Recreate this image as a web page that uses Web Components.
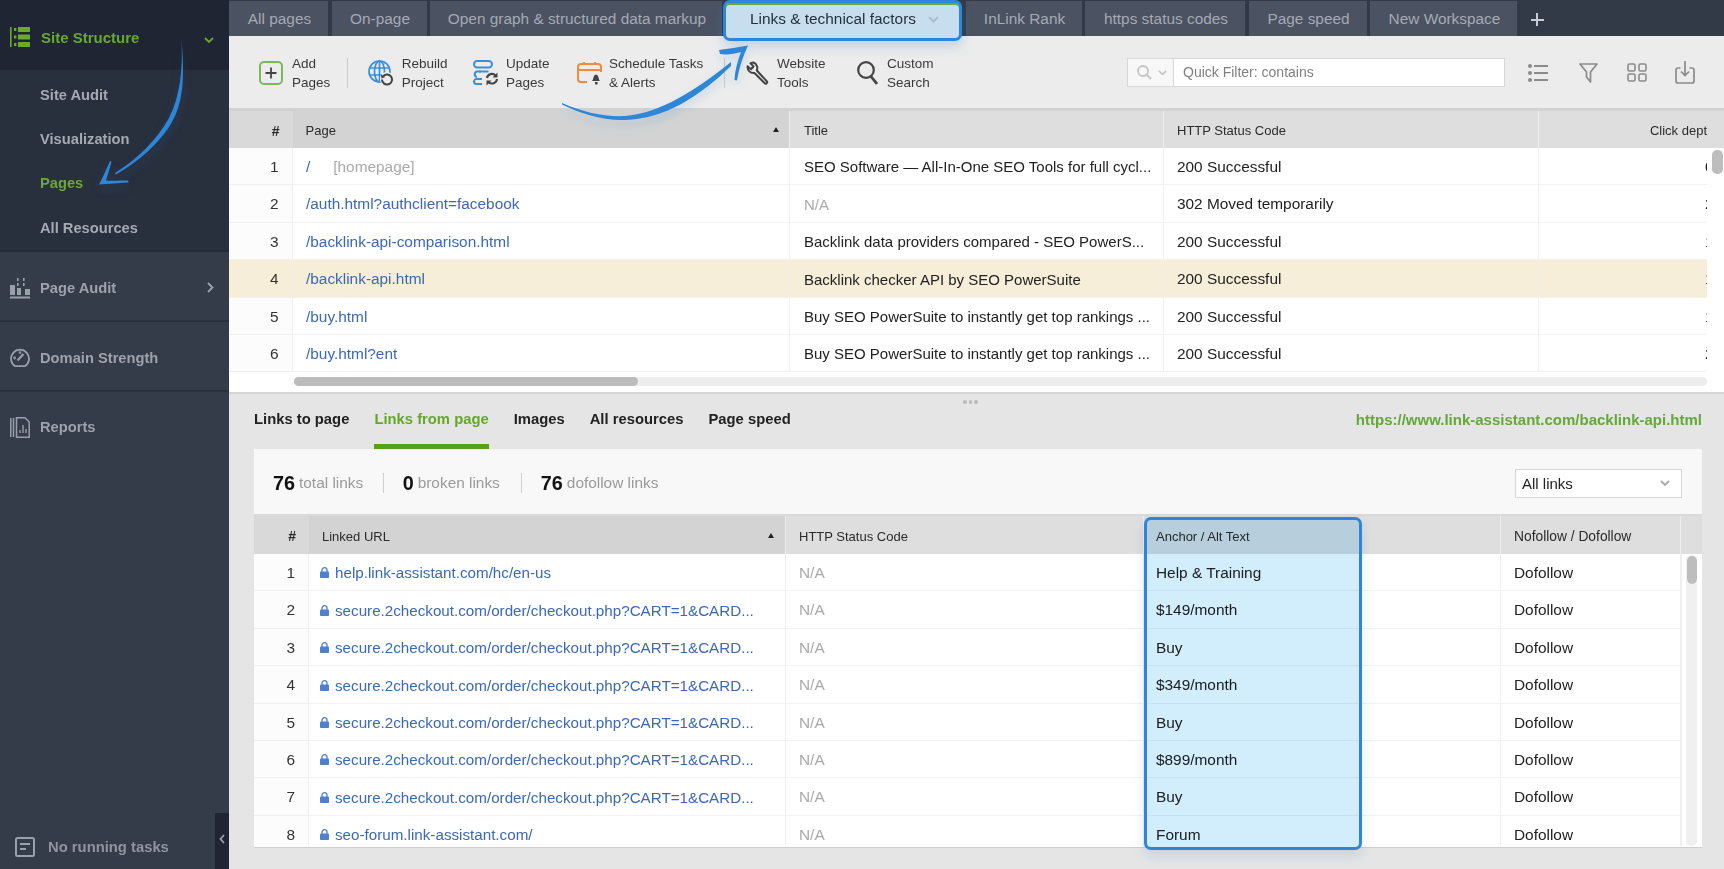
<!DOCTYPE html>
<html>
<head>
<meta charset="utf-8">
<title>Site Structure</title>
<style>
html, body { margin: 0; height: 100%; overflow: hidden; background: #e5e5e5; }
body { font-family: "Liberation Sans", Arial, sans-serif; }
</style>
</head>
<body>
<app-shell>
  <side-bar slot="side">
    <side-head label="Site Structure" icon="structure"></side-head>
    <side-list>
      <side-sub>Site Audit</side-sub>
      <side-sub>Visualization</side-sub>
      <side-sub active>Pages</side-sub>
      <side-sub>All Resources</side-sub>
    </side-list>
    <side-section icon="audit" arrow>Page Audit</side-section>
    <side-section icon="gauge">Domain Strength</side-section>
    <side-section icon="reports">Reports</side-section>
  </side-bar>

  <tab-bar slot="tabs">
    <tab-item style="width:99px">All pages</tab-item>
    <tab-item style="width:95px">On-page</tab-item>
    <tab-item style="width:292px">Open graph &amp; structured data markup</tab-item>
    <tab-item active style="width:239px">Links &amp; technical factors</tab-item>
    <tab-item style="width:116px">InLink Rank</tab-item>
    <tab-item style="width:160px">https status codes</tab-item>
    <tab-item style="width:118px">Page speed</tab-item>
    <tab-item style="width:147px">New Workspace</tab-item>
  </tab-bar>

  <tool-bar slot="tools"></tool-bar>
  <pages-table slot="top"></pages-table>
  <detail-panel slot="bottom"></detail-panel>
</app-shell>

<script>
const ICONS = {
  structure: `<svg width="20" height="20" viewBox="0 0 20 20" fill="#6aaa2c"><rect x="0" y="0" width="1.6" height="20"/><rect x="4" y="1" width="2.4" height="3"/><rect x="8" y="0" width="12" height="5"/><rect x="4" y="8.5" width="2.4" height="3"/><rect x="8" y="7.5" width="12" height="5"/><rect x="4" y="16" width="2.4" height="3"/><rect x="8" y="15" width="12" height="5"/></svg>`,
  audit: `<svg width="20" height="22" viewBox="0 0 20 22" fill="#9aa0a9"><rect x="0" y="8" width="5" height="10"/><rect x="7" y="1" width="1.6" height="3"/><rect x="7" y="6" width="1.6" height="3"/><rect x="7" y="11" width="4" height="7"/><rect x="13" y="1" width="1.6" height="3"/><rect x="13" y="6" width="1.6" height="3"/><rect x="15" y="12" width="5" height="6"/><rect x="0" y="19.5" width="20" height="2"/></svg>`,
  gauge: `<svg width="20" height="20" viewBox="0 0 20 20" fill="none" stroke="#9aa0a9" stroke-width="1.8"><path d="M5 18.2 A9 9 0 1 1 15 18.2 Z" stroke-linejoin="round"/><path d="M7.5 12.5 L13.5 6" stroke-width="2.2"/><circle cx="4.6" cy="10" r=".5"/><circle cx="10" cy="4.6" r=".5"/></svg>`,
  reports: `<svg width="20" height="21" viewBox="0 0 20 21" fill="none" stroke="#9aa0a9" stroke-width="1.5"><path d="M.8 1v19"/><path d="M3.5 1v19"/><path d="M6.5 .8h8.5l4.2 4.2v15.2H6.5z"/><path d="M10 16v-3M13 16V8M16 16v-4" stroke-width="1.4"/></svg>`,
  tasks: `<svg width="20" height="20" viewBox="0 0 20 20" fill="none" stroke="#9aa0a9" stroke-width="2"><rect x="1" y="1" width="18" height="18" rx="1.5"/><path d="M5 7h10M5 12h6"/></svg>`,
  add: `<svg width="24" height="24" viewBox="0 0 24 24" fill="none"><rect x="1" y="1" width="22" height="22" rx="4" stroke="#7db75d" stroke-width="2"/><path d="M12 6.5v11M6.5 12h11" stroke="#444" stroke-width="1.8"/></svg>`,
  globe: `<svg width="26" height="26" viewBox="0 0 26 26" fill="none"><g stroke="#3a8fdc" stroke-width="1.7"><circle cx="11.5" cy="11.5" r="10.5"/><ellipse cx="11.5" cy="11.5" rx="5" ry="10.5"/><path d="M11.5 1v21M1.5 8h20M1.5 15h20"/></g><circle cx="19" cy="19" r="7" fill="#ececec"/><path d="M14.8 16.8A5 5 0 1 1 14 19.5" stroke="#444" stroke-width="2"/><path d="M12.8 14.5l.8 4 3.6-1.5z" fill="#444"/></svg>`,
  update: `<svg width="26" height="26" viewBox="0 0 26 26" fill="none"><g stroke="#3a8fdc" stroke-width="2"><rect x="1" y="1" width="18" height="6.5" rx="3.2"/><path d="M8 11.5h-4a2.8 2.8 0 0 0 0 5.5"/><path d="M4 7.5M6 11.5h9.5"/><path d="M1 21.5a2.6 2.6 0 0 1 2.6-2.6h5.4M1 21.5a2.6 2.6 0 0 0 2.6 2.6h5.4"/></g><g stroke="#444" stroke-width="2.2"><path d="M14 18a5 5 0 0 1 8.5-2.5"/><path d="M24 19a5 5 0 0 1-8.5 3"/></g><path d="M24.5 12.5v5h-5zM13.5 25.5v-5h5z" fill="#444"/></svg>`,
  schedule: `<svg width="25" height="24" viewBox="0 0 25 24" fill="none"><path d="M10 21H4a3 3 0 0 1-3-3V6a3 3 0 0 1 3-3h17a3 3 0 0 1 3 3v5" stroke="#f28a3c" stroke-width="2"/><path d="M1 9h23M7 1v3M18 1v3" stroke="#f28a3c" stroke-width="2"/><path d="M15 20c1.5-1 1-6 4-6.500 3 .5 2.500 5.500 4 6.500z" fill="#444"/><rect x="18" y="21" width="2.600" height="2.400" fill="#444"/></svg>`,
  wrench: `<svg width="24" height="24" viewBox="0 0 24 24" fill="none" stroke="#444" stroke-width="2" stroke-linejoin="round"><path d="M8.500 1.500l-3 .8 3 3.200-2.500 2.700-3.400-3A6 6 0 0 0 9.500 12L20 22.500c1 .8 2.800-1 2-2L11.800 9.500A6 6 0 0 0 8.500 1.500z"/></svg>`,
  search: `<svg width="21" height="24" viewBox="0 0 21 24" fill="none" stroke="#444"><circle cx="9" cy="9" r="7.800" stroke-width="2.200"/><path d="M14 15.500l6 7.500" stroke-width="2.800"/></svg>`,
  list: `<svg width="20" height="18" viewBox="0 0 20 18" fill="#8b8b8b"><circle cx="2" cy="2" r="2"/><circle cx="2" cy="9" r="2"/><circle cx="2" cy="16" r="2"/><rect x="6" y="1" width="14" height="2"/><rect x="6" y="8" width="14" height="2"/><rect x="6" y="15" width="14" height="2"/></svg>`,
  filter: `<svg width="19" height="20" viewBox="0 0 19 20" fill="none" stroke="#8b8b8b" stroke-width="1.700" stroke-linejoin="round"><path d="M1 1h17l-6.500 8v10l-4-5V9z"/></svg>`,
  grid: `<svg width="20" height="19" viewBox="0 0 20 19" fill="none" stroke="#8b8b8b" stroke-width="1.600"><rect x="1" y="1" width="7" height="7" rx="1.500"/><rect x="12" y="1" width="7" height="7" rx="1.500"/><rect x="1" y="11" width="7" height="7" rx="1.500"/><rect x="12" y="11" width="7" height="7" rx="1.500"/></svg>`,
  save: `<svg width="20" height="23" viewBox="0 0 20 23" fill="none" stroke="#8b8b8b" stroke-width="1.700"><path d="M5.500 7H3a2 2 0 0 0-2 2v11a2 2 0 0 0 2 2h14a2 2 0 0 0 2-2V9a2 2 0 0 0-2-2h-2.500"/><path d="M10 0v14M6 10.500l4 4 4-4"/></svg>`,
  lock: `<svg width="9" height="11" viewBox="0 0 9 11"><path d="M2 5V3.200a2.500 2.500 0 0 1 5 0V5" fill="none" stroke="#4f80d0" stroke-width="1.300"/><rect x="0" y="4.500" width="9" height="6.500" rx=".8" fill="#4f80d0"/></svg>`,
  lens: `<svg width="15" height="15" viewBox="0 0 15 15" fill="none" stroke="#c4c4c4" stroke-width="1.800"><circle cx="6" cy="6" r="5"/><path d="M9.500 9.500l4.500 4.500"/></svg>`
};
const chevronDown = (c, w) => `<svg width="${w}" height="${w * .6}" viewBox="0 0 10 6" fill="none" stroke="${c}" stroke-width="1.800"><path d="M1 1l4 4 4-4"/></svg>`;

function define(name, css, html, setup) {
  customElements.define(name, class extends HTMLElement {
    constructor() {
      super();
      this.attachShadow({ mode: "open" });
      const tpl = document.createElement("template");
      tpl.innerHTML = `<style>${css}</style>${typeof html === "function" ? html(this) : html}`;
      this.shadowRoot.appendChild(tpl.content.cloneNode(true));
    }
    connectedCallback() {
      if (setup) setup(this, this.shadowRoot);
    }
  });
}

define("app-shell", `
  :host { display: grid; grid-template-columns: 229px 1495px; grid-template-rows: 36px 75px 283px 1fr; width: 1724px; height: 869px; position: relative; overflow: hidden; background: #e5e5e5; }
  .side { grid-row: 1 / 5; display: flex; }
  .cell { min-width: 0; }
  svg.over { position: absolute; left: 0; top: 0; pointer-events: none; z-index: 5; filter: drop-shadow(0 5px 5px rgba(46,134,216,.2)); }
`, `
  <div class="side"><slot name="side"></slot></div>
  <div class="cell"><slot name="tabs"></slot></div>
  <div class="cell"><slot name="tools"></slot></div>
  <div class="cell"><slot name="top"></slot></div>
  <div class="cell"><slot name="bottom"></slot></div>
  <svg class="over" width="1724" height="869" viewBox="0 0 1724 869" fill="#2e86d8">
    <path d="M181.500 39C184 70 185 100 172 122C160 143 138 162 116 174.500L115 173C136 160 156 141 168.500 119C180 97 183 70 181.500 39Z"/>
    <path d="M110 161C106 170 103 177 99 184.500C108 184 118 183 128.500 182.500L128 180.500C120 180.500 112 181 106 180.500C108 174 110 168 111.500 161.500Z"/>
    <path d="M562 103C585 113 605 117 625 116C660 113 695 91 731 62L731 66C700 96 665 119 625 120C600 120.500 580 113 562 104.500Z"/>
    <path d="M719 50C728 49 738 47 748 45.500C743 56 739 68 737 80.500L734.500 80C735 70 738 60 741 52C734 54 727 55 720 54Z"/>
  </svg>
`);

define("side-bar", `
  :host { display: flex; flex-direction: column; width: 229px; height: 869px; background: #343b49; position: relative; color: #9da2ab; font-size: 14.700px; font-weight: bold; }
  .foot { margin-top: auto; display: flex; align-items: center; height: 56px; position: relative; }
  .foot svg { margin-left: 15px; margin-right: 13px; margin-top: 12px; }
  .foot span { margin-top: 12px; font-size: 14.800px; color: #8f949d; }
  .fold { position: absolute; right: 0; top: 0; bottom: 0; width: 14px; background: #1f2532; display: flex; align-items: center; justify-content: center; padding-bottom: 4px; box-sizing: border-box; }
  .fold svg { margin: 0; }
`, `
  <slot></slot>
  <div class="foot">${ICONS.tasks}<span>No running tasks</span><div class="fold"><svg width="6" height="10" viewBox="0 0 6 10" fill="none" stroke="#9da2ab" stroke-width="1.800"><path d="M5 1L1.500 5 5 9"/></svg></div></div>
`);

define("side-head", `
  :host { display: flex; align-items: center; height: 70px; padding: 4px 0 0 10px; box-sizing: border-box; background: #1f2532; color: #66aa2b; font-size: 15px; font-weight: bold; }
  .ic { width: 31px; display: flex; }
  .chev { margin-left: auto; margin-right: 15px; }
`, el => `
  <div class="ic">${ICONS[el.getAttribute("icon")]}</div><span>${el.getAttribute("label")}</span>
  <div class="chev">${chevronDown("#66aa2b", 10)}</div>
`);

define("side-list", `
  :host { display: flex; flex-direction: column; height: 182px; padding-top: 2.500px; box-sizing: border-box; background: #282f3d; border-bottom: 2px solid #232935; }
`, `<slot></slot>`);

define("side-sub", `
  :host { display: flex; align-items: center; height: 45px; padding-left: 40px; color: #a5aab2; font-size: 14.700px; font-weight: bold; }
  :host([active]) { color: #6ca92f; }
`, `<slot></slot>`);

define("side-section", `
  :host { display: flex; align-items: center; height: 70px; padding: 4px 0 0 10px; border-bottom: 2px solid #2a303c; box-sizing: border-box; color: #9da2ab; font-size: 14.700px; font-weight: bold; }
  :host(:last-of-type) { border-bottom: 0; padding-top: 0; }
  .ic { width: 30px; display: flex; }
  .chev { margin-left: auto; margin-right: 15px; }
`, el => `
  <div class="ic">${ICONS[el.getAttribute("icon")]}</div><slot></slot>
  ${el.hasAttribute("arrow") ? `<div class="chev"><svg width="7" height="11" viewBox="0 0 7 11" fill="none" stroke="#9da2ab" stroke-width="1.800"><path d="M1 1l4.500 4.500L1 10"/></svg></div>` : ""}
`);

define("tab-bar", `
  :host { display: flex; gap: 3.500px; align-items: flex-start; height: 36px; background: #333a47; padding-top: 1px; box-sizing: border-box; position: relative; z-index: 3; }
  .plus { width: 13px; height: 13px; margin: 12px 0 0 10px; position: relative; }
  .plus::before, .plus::after { content: ""; position: absolute; background: #c9ccd2; }
  .plus::before { left: 0; right: 0; top: 5.500px; height: 2px; }
  .plus::after { top: 0; bottom: 0; left: 5.500px; width: 2px; }
`, `<slot></slot><div class="plus"></div>`);

define("tab-item", `
  :host { display: flex; align-items: center; justify-content: center; height: 35px; padding-left: 2px; background: #4b5262; color: #a5aab3; font-size: 15.4px; white-space: nowrap; box-sizing: border-box; flex: none; }
  :host([active]) { height: 41px; margin: -1px 0 -5px -2.500px; position: relative; z-index: 4; justify-content: flex-start; padding: 0 0 3px 24px; background: #c6deee; color: #26313d; border: 3px solid #2e86d8; border-radius: 7px; box-shadow: 0 5px 12px rgba(46,134,216,.25), inset 0 2px 0 #6aaa2c; }
  .chev { display: none; }
  :host([active]) .chev { display: block; margin-left: 12px; margin-top: -2px; }
`, `<slot></slot><div class="chev">${chevronDown("#a9bccb", 11)}</div>`);

define("tool-btn", `
  :host { display: flex; align-items: center; flex: none; font-size: 13.500px; line-height: 19px; color: #3a3a3a; box-sizing: border-box; }
  .ic { display: flex; flex: none; }
  .lb { white-space: nowrap; }
`, el => `<div class="ic" style="width:${el.getAttribute("box")}px">${ICONS[el.getAttribute("icon")]}</div><div class="lb"><slot></slot></div>`);

define("tool-bar", `
  :host { display: flex; align-items: center; height: 75px; box-sizing: border-box; background: #ececec; border-bottom: 3px solid #d2d2d2; padding: 1px 0 0 30px; }
  .sep { width: 1px; height: 30px; background: #c9c9c9; flex: none; }
  .filter { display: flex; width: 378px; height: 29px; box-sizing: border-box; margin-left: auto; border: 1.500px solid #d8d8d8; background: #fff; flex: none; }
  .pick { width: 46px; display: flex; align-items: center; gap: 6px; padding-left: 9px; box-sizing: border-box; background: #f7f7f7; border-right: 1.500px solid #d8d8d8; }
  .q { padding-left: 9px; font-size: 14px; color: #7f7f7f; line-height: 26px; white-space: nowrap; }
  .right { display: flex; align-items: center; margin-left: 23px; }
  .right div { display: flex; }
`, `
  <tool-btn icon="add" box="33" style="width:70px">Add<br>Pages</tool-btn>
  <div class="sep" style="margin:0 20px 0 18px"></div>
  <tool-btn icon="globe" box="33.700" style="width:105px">Rebuild<br>Project</tool-btn>
  <tool-btn icon="update" box="33" style="width:104px">Update<br>Pages</tool-btn>
  <tool-btn icon="schedule" box="32" style="width:129px">Schedule Tasks<br>&amp; Alerts</tool-btn>
  <div class="sep" style="margin:0 20.300px 0 17.700px"></div>
  <tool-btn icon="wrench" box="32" style="width:112px">Website<br>Tools</tool-btn>
  <tool-btn icon="search" box="30">Custom<br>Search</tool-btn>
  <div class="filter">
    <div class="pick">${ICONS.lens}${chevronDown("#c4c4c4", 9)}</div>
    <div class="q">Quick Filter: contains</div>
  </div>
  <div class="right">
    <div>${ICONS.list}</div>
    <div style="margin-left:31px">${ICONS.filter}</div>
    <div style="margin-left:29px">${ICONS.grid}</div>
    <div style="margin-left:28px;margin-right:29px">${ICONS.save}</div>
  </div>
`);

const GRID_CSS = `
  :host { display: block; color: #222; }
  .head { display: grid; height: var(--head-h); font-size: 13px; color: #2b2b2b; background: #dedede; }
  .head > div { display: flex; align-items: center; box-sizing: border-box; white-space: nowrap; border-right: 1.500px solid #eeeeee; min-width: 0; padding-top: 2px; }
  .head .sorted { background: #d3d3d3; }
  .head .num { background: #d9d9d9; justify-content: flex-end; padding-right: 13px; font-weight: bold; font-size: 14px; border-right: 0; }
  .tri { margin-left: auto; margin-top: -2px; width: 0; height: 0; border: 3.500px solid transparent; border-bottom: 5px solid #222; border-top: 0; }
  .body { display: flex; }
  .rows { flex: none; }
  .row { display: grid; height: 37.400px; box-sizing: border-box; background: #fff; border-bottom: 1.500px solid #f1f1f1; font-size: 15.4px; }
  .row.hi { background: #f6eed8; }
  .row > div { display: flex; align-items: center; box-sizing: border-box; white-space: nowrap; overflow: hidden; border-right: 1px solid #efefef; min-width: 0; padding-top: 1.500px; }
  .row .num { justify-content: flex-end; padding-right: 13px; background: #fcfcfc; color: #333; }
  .row.hi .num { background: transparent; }
  a { color: #3a68bb; text-decoration: none; }
  .na { color: #a9a9a9; }
  .home { color: #aaaaaa; margin-left: 23px; }
`;

define("pages-table", GRID_CSS + `
  :host { --head-h: 37px; height: 283px; background: #fff; border-bottom: 2px solid #d6d6d6; box-sizing: border-box; position: relative; }
  .head { grid-template-columns: 63.500px 497.500px 374px 375px 185px; }
  .row { grid-template-columns: 63.500px 497.500px 374px 375px 168px; width: 1478px; }
  .sb { flex: 1; position: relative; }
  .sb i { position: absolute; left: 5px; top: 2px; width: 11px; height: 24px; border-radius: 5px; background: #bdbdbd; }
  .hs { height: 18.500px; background: #fff; padding: 5px 17px 0 65px; box-sizing: border-box; }
  .hs div { height: 9px; border-radius: 5px; background: #ededed; }
  .hs i { display: block; height: 9px; width: 344px; border-radius: 5px; background: #bcbcbc; }
  .clip { padding-left: 166px; }
  .title { font-size: 15px; }
`, `
  <div class="head">
    <div class="num">#</div>
    <div class="sorted" style="padding-left:13px;padding-right:10px">Page<span class="tri"></span></div>
    <div style="padding-left:14px">Title</div>
    <div style="padding-left:13px">HTTP Status Code</div>
    <div style="justify-content:flex-end;padding-right:17px;border:0">Click dept</div>
  </div>
  <div class="body"><div class="rows"></div><div class="sb"><i></i></div></div>
  <div class="hs"><div><i></i></div></div>
`, (el, root) => {
  const data = [
    [`<a>/</a><span class="home">[homepage]</span>`, "SEO Software — All-In-One SEO Tools for full cycl...", "200 Successful", "0"],
    [`<a>/auth.html?authclient=facebook</a>`, `<span class="na">N/A</span>`, "302 Moved temporarily", "2"],
    [`<a>/backlink-api-comparison.html</a>`, "Backlink data providers compared - SEO PowerS...", "200 Successful", "1"],
    [`<a>/backlink-api.html</a>`, "Backlink checker API by SEO PowerSuite", "200 Successful", "1"],
    [`<a>/buy.html</a>`, "Buy SEO PowerSuite to instantly get top rankings ...", "200 Successful", "1"],
    [`<a>/buy.html?ent</a>`, "Buy SEO PowerSuite to instantly get top rankings ...", "200 Successful", "2"]
  ];
  root.querySelector(".rows").innerHTML = data.map((r, i) => `
    <div class="row${i === 3 ? " hi" : ""}">
      <div class="num">${i + 1}</div>
      <div style="padding-left:13.500px">${r[0]}</div>
      <div class="title" style="padding-left:14px">${r[1]}</div>
      <div style="padding-left:13px">${r[2]}</div>
      <div class="clip" style="border:0">${r[3]}</div>
    </div>`).join("");
});

define("detail-panel", `
  :host { display: block; height: 475px; box-sizing: border-box; padding: 0 22px 0 25px; position: relative; color: #222; }
  .dots { position: absolute; left: 734px; top: 6px; display: flex; gap: 2px; }
  .dots i { width: 3.500px; height: 3.500px; border-radius: 50%; background: #bcbcbc; }
  nav { display: flex; height: 55px; font-size: 14.800px; font-weight: bold; color: #222; align-items: stretch; }
  nav span { display: flex; align-items: center; padding-bottom: 5px; box-sizing: border-box; margin-right: 25px; white-space: nowrap; }
  nav .on { color: #64a82a; border-bottom: 5px solid #55a01c; padding-bottom: 0; }
  nav .url { margin: 0 0 0 auto; color: #62a93a; font-weight: bold; font-size: 15px; }
  .sum { display: flex; align-items: center; height: 67px; box-sizing: border-box; padding: 3px 20px 0 19px; background: #f8f8f8; border-bottom: 2px solid #d9d9d9; font-size: 15.4px; color: #9a9a9a; white-space: nowrap; }
  .sum b { font-size: 19.800px; color: #111; margin-right: 4px; }
  .sum .s { width: 1px; height: 20px; background: #cfcfcf; }
  .sel { margin-left: auto; width: 167px; height: 29px; box-sizing: border-box; background: #fff; border: 1.500px solid #d8d8d8; display: flex; align-items: center; justify-content: space-between; padding: 0 11px 0 6px; color: #222; font-size: 15px; }
`, `
  <div class="dots"><i></i><i></i><i></i></div>
  <nav>
    <span>Links to page</span><span class="on">Links from page</span><span>Images</span><span>All resources</span><span>Page speed</span>
    <span class="url">https://www.link-assistant.com/backlink-api.html</span>
  </nav>
  <div class="sum">
    <b>76</b><span>total links</span><div class="s" style="margin:0 18.500px 0 20px"></div>
    <b>0</b><span>broken links</span><div class="s" style="margin:0 19px 0 21px"></div>
    <b>76</b><span>dofollow links</span>
    <div class="sel"><span>All links</span>${chevronDown("#a9a9a9", 10)}</div>
  </div>
  <links-table></links-table>
`);

define("links-table", GRID_CSS + `
  :host { --head-h: 38px; height: 331px; background: #fff; overflow: visible; position: relative; border-bottom: 1.500px solid #cfcfcf; box-sizing: content-box; }
  .head, .row { grid-template-columns: 55px 477px 358px 357px 180px; }
  .head { grid-template-columns: 55px 477px 358px 357px 180px 21px; }
  .view { height: 292px; overflow: hidden; display: flex; }
  .rows { width: 1427px; }
  .row { width: 1427px; }
  .url { font-size: 15.200px; }
  .sb { width: 21px; border-left: 1px solid #efefef; box-sizing: border-box; position: relative; padding: 1px 5px 0 4px; }
  .sb u { display: block; height: 100%; background: #f0f0f0; border-radius: 5px; }
  .sb i { position: absolute; left: 4.500px; top: 2px; width: 10px; height: 28px; border-radius: 5px; background: #bdbdbd; }
  .lock { margin-right: 6px; display: flex; }
  .tint, .frame { position: absolute; left: 889.500px; top: 1px; width: 218px; bottom: -3px; box-sizing: border-box; border-radius: 7px; }
  .tint { background: #d2eefd; mix-blend-mode: multiply; box-shadow: 0 6px 12px rgba(46,134,216,.16); }
  .frame { border: 3px solid #2e86d8; }
`, `
  <div class="head">
    <div class="num">#</div>
    <div class="sorted" style="padding-left:13px;padding-right:11px">Linked URL<span class="tri"></span></div>
    <div style="padding-left:13px">HTTP Status Code</div>
    <div style="padding-left:12px">Anchor / Alt Text</div>
    <div style="padding-left:13px;font-size:13.800px">Nofollow / Dofollow</div>
    <div style="border:0"></div>
  </div>
  <div class="view"><div class="rows"></div><div class="sb"><u></u><i></i></div></div>
  <div class="tint"></div>
  <div class="frame"></div>
`, (el, root) => {
  const co = "secure.2checkout.com/order/checkout.php?CART=1&amp;CARD...";
  const data = [
    ["help.link-assistant.com/hc/en-us", "Help &amp; Training"],
    [co, "$149/month"], [co, "Buy"], [co, "$349/month"], [co, "Buy"], [co, "$899/month"], [co, "Buy"],
    ["seo-forum.link-assistant.com/", "Forum"]
  ];
  root.querySelector(".rows").innerHTML = data.map((r, i) => `
    <div class="row">
      <div class="num">${i + 1}</div>
      <div class="url" style="padding-left:11px"><span class="lock">${ICONS.lock}</span><a>${r[0]}</a></div>
      <div style="padding-left:13px"><span class="na">N/A</span></div>
      <div style="padding-left:12px">${r[1]}</div>
      <div style="padding-left:13px">Dofollow</div>
    </div>`).join("");
});
</script>
</body>
</html>
